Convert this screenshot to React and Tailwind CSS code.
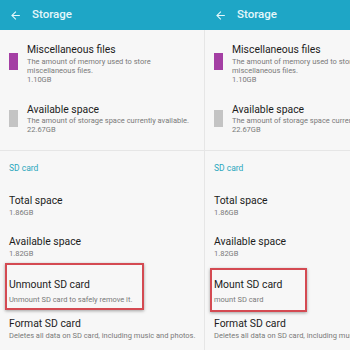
import React from 'react';

const font = { fontFamily: 'Roboto, "Noto Sans", sans-serif' };

function BackArrow() {
    return (
        <svg width="13" height="13" viewBox="0 0 24 24" className="fill-[#e4f7fb]">
            <path d="M20 11H7.83l5.59-5.59L12 4l-8 8 8 8 1.41-1.41L7.83 13H20v-2z" />
        </svg>
    );
}

function Title({ children }) {
    return <div className="text-[10.4px] leading-[13px] text-[#1c1c1c] whitespace-nowrap">{children}</div>;
}

function Desc({ children }) {
    return <div className="text-[7.5px] leading-[9px] text-[#7a7a7a] whitespace-nowrap">{children}</div>;
}

function Panel({ mount }) {
    return (
        <div className="w-[205px] shrink-0 h-[350px] flex flex-col" style={font}>
            <div className="h-[30px] bg-[#1ea6c6] flex items-center pl-[9px] gap-[10px]">
                <BackArrow />
                <span className="text-[11.5px] font-medium text-[#e4f7fb]">Storage</span>
            </div>

            <div className="flex-1 bg-[#f7f7f7] border-r border-[#e6e6e6] relative">
                {/* Miscellaneous files */}
                <div className="flex pt-[13px] pl-[9px]">
                    <div className="w-[9px] h-[17px] bg-[#a43fa4] mt-[10px] mr-[9px] shrink-0" />
                    <div>
                        <Title>Miscellaneous files</Title>
                        <div className="mt-px">
                            <Desc>The amount of memory used to store</Desc>
                            <Desc>miscellaneous files.</Desc>
                            <Desc>1.10GB</Desc>
                        </div>
                    </div>
                </div>

                {/* Available space */}
                <div className="flex pt-[19px] pl-[9px]">
                    <div className="w-[9px] h-[17px] bg-[#c4c4c4] mt-[7px] mr-[9px] shrink-0" />
                    <div>
                        <Title>Available space</Title>
                        <Desc>The amount of storage space currently available.</Desc>
                        <Desc>22.67GB</Desc>
                    </div>
                </div>

                <div className="h-px bg-[#e6e6e6] mt-[16px]" />

                <div className="pl-[9px] pt-[12px] text-[8.5px] leading-[10px] text-[#2aa7bd]">SD card</div>

                <div className="pl-[9px] pt-[21px]">
                    <Title>Total space</Title>
                    <div className="mt-px"><Desc>1.86GB</Desc></div>
                </div>

                <div className="pl-[9px] pt-[18px]">
                    <Title>Available space</Title>
                    <div className="mt-px"><Desc>1.82GB</Desc></div>
                </div>

                <div className="pl-[9px] pt-[20px]">
                    <Title>{mount ? 'Mount SD card' : 'Unmount SD card'}</Title>
                    <div className="mt-[4px]">
                        <Desc>{mount ? 'mount SD card' : 'Unmount SD card to safely remove it.'}</Desc>
                    </div>
                </div>

                <div className="pl-[9px] pt-[13px]">
                    <Title>Format SD card</Title>
                    <div className="mt-px">
                        <Desc>Deletes all data on SD card, including music and photos.</Desc>
                    </div>
                </div>

                {/* annotation box */}
                <div
                    className={
                        mount
                            ? 'absolute left-[5px] top-[238px] w-[97px] h-[44px] border-2 border-[#d44a52] shadow-[0_1px_3px_rgba(0,0,0,0.35)]'
                            : 'absolute left-[5px] top-[233px] w-[139px] h-[47px] border-2 border-[#d44a52] shadow-[0_1px_3px_rgba(0,0,0,0.35)]'
                    }
                />
            </div>
        </div>
    );
}

export default function App() {
    return (
        <div className="w-[350px] h-[350px] overflow-hidden flex bg-[#f7f7f7]">
            <Panel />
            <Panel mount />
        </div>
    );
}
